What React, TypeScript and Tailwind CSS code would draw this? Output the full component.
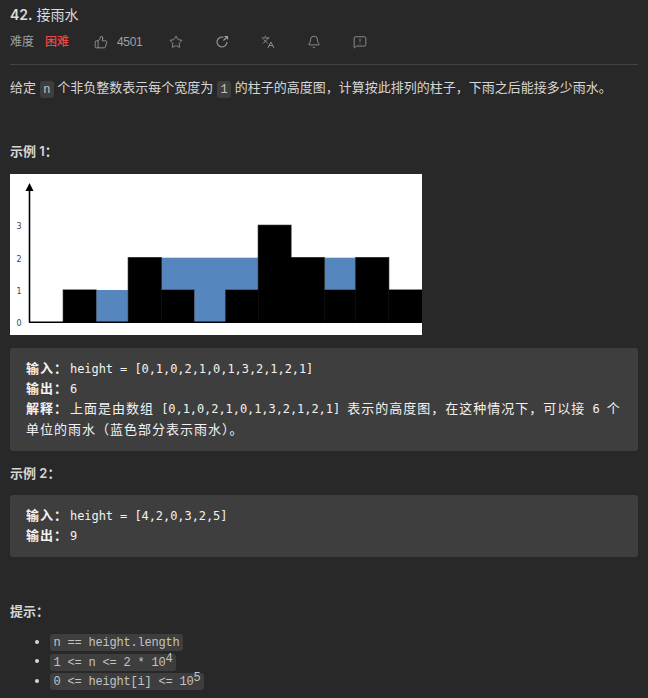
import React from 'react';
import { ThumbsUp, Star, Languages, Bell, MessageSquareWarning } from 'lucide-react';

const SANS = 'font-["Inter","Noto_Sans_CJK_SC",sans-serif]';

const BARS = [
  { x: 53.3, w: 32.7, y: 116 },
  { x: 118.3, w: 33, y: 83.7 },
  { x: 151.3, w: 32.7, y: 116 },
  { x: 215.7, w: 32.6, y: 116 },
  { x: 248.3, w: 32.7, y: 51.3 },
  { x: 281, w: 33.3, y: 83.7 },
  { x: 314.3, w: 31.4, y: 116 },
  { x: 345.7, w: 33, y: 83.7 },
  { x: 378.7, w: 33.3, y: 116 },
];

const RainChart = () => (
  <svg width="412" height="161" viewBox="0 0 412 161" className="block bg-white">
    <rect x="86" y="116" width="32.3" height="32.3" fill="#5586bd" />
    <rect x="151.3" y="83.7" width="97" height="32.3" fill="#5586bd" />
    <rect x="184" y="116" width="31.7" height="32.3" fill="#5586bd" />
    <rect x="314.3" y="83.7" width="31.4" height="32.3" fill="#5586bd" />
    {BARS.map((b, i) => (
      <rect key={i} x={b.x} y={b.y} width={b.w} height={148.3 - b.y} fill="#000" stroke="#444" strokeWidth="1.2" />
    ))}
    {BARS.map((b, i) => (
      <rect key={i} x={b.x} y={b.y} width={b.w} height={148.3 - b.y} fill="#000" />
    ))}
    <line x1="19.5" y1="14" x2="19.5" y2="148.5" stroke="#000" strokeWidth="1.6" />
    <line x1="19" y1="148.3" x2="412" y2="148.3" stroke="#000" strokeWidth="1.6" />
    <path d="M19.5 9 L23.5 17 L15.5 17 Z" fill="#000" />
    {[['3', 55], ['2', 87.5], ['1', 120], ['0', 152]].map(([t, y]) => (
      <text key={t} x="9" y={y} fontSize="8" fill="#444" textAnchor="middle" fontFamily="DejaVu Sans, sans-serif">{t}</text>
    ))}
  </svg>
);

const Code = ({ children }: { children: React.ReactNode }) => (
  <code className='rounded-[3px] bg-[#3e3e3e] px-[3.5px] py-[1.5px] font-["Liberation_Mono",monospace] text-[12px] tracking-[-0.2px] text-[#c4c4c4]'>{children}</code>
);

const Cjk = ({ children }: { children: React.ReactNode }) => (
  <span className='font-["Noto_Sans_CJK_SC",sans-serif] text-[13px] leading-none tracking-[1px]'>{children}</span>
);

const Label = ({ children }: { children: React.ReactNode }) => (
  <span className='mr-[2px] font-["Noto_Sans_CJK_SC",sans-serif] text-[13px] leading-none font-bold tracking-[1px]'>{children}</span>
);

const Pre = ({ children }: { children: React.ReactNode }) => (
  <pre className='rounded-[3px] bg-[#3e3e3e] px-4 py-[10.75px] font-["DejaVu_Sans_Mono",monospace] text-[12px] leading-[20.33px] tracking-[-0.07px] text-[#f2f2f2]'>{children}</pre>
);

export default function App() {
  return (
    <div className={`h-[698px] overflow-hidden bg-[#282828] px-[10px] ${SANS} text-[13px] text-[#d6d6d6]`}>
      <div className="h-[31px] pt-[5px] text-[14px] leading-[20px] text-[#dcdcdc]">
        <span className="font-semibold">42.</span> 接雨水
      </div>

      <div className="flex h-[21px] items-center text-[12px] text-[#a0a0a0]">
        <span className="w-[35px]">难度</span>
        <span className="w-[49px] font-medium text-[#ef4743]">困难</span>
        <ThumbsUp size={14} strokeWidth={1.4} />
        <span className='ml-[9px] w-[52px] font-["Liberation_Sans",sans-serif] text-[12px] tracking-[-0.3px] text-[#a0a0a8]'>4501</span>
        <div className="flex gap-[32px]">
          <Star size={14} strokeWidth={1.4} />
          <svg width="14" height="14" viewBox="0 0 14 14" fill="none" stroke="currentColor" strokeWidth="1.1">
            <path d="M8.5 2.2 A5 5 0 1 0 12 7" />
            <path d="M9.5 1.5 H12.5 V4.5 M12.5 1.5 L8.5 5.5" />
          </svg>
          <Languages size={14} strokeWidth={1.4} />
          <Bell size={14} strokeWidth={1.4} />
          <MessageSquareWarning size={14} strokeWidth={1.4} />
        </div>
      </div>

      <div className="mt-[12px] border-t border-[#434343]" />

      <p className="mt-[12px] leading-[20px]">
        给定 <Code>n</Code> 个非负整数表示每个宽度为 <Code>1</Code> 的柱子的高度图，计算按此排列的柱子，下雨之后能接多少雨水。
      </p>

      <p className="mt-[42px] font-semibold leading-[20px]">示例 1：</p>

      <div className="mt-[13px]">
        <RainChart />
      </div>

      <div className="mt-[13px]">
        <Pre>
          <Label>输入：</Label>height = [0,1,0,2,1,0,1,3,2,1,2,1]{'\n'}
          <Label>输出：</Label>6{'\n'}
          <Label>解释：</Label><Cjk>上面是由数组</Cjk> [0,1,0,2,1,0,1,3,2,1,2,1] <Cjk>表示的高度图，在这种情况下，可以接</Cjk> 6 <Cjk>个</Cjk>{'\n'}
          <Cjk>单位的雨水（蓝色部分表示雨水）。</Cjk>
        </Pre>
      </div>

      <p className="mt-[12px] font-semibold leading-[20px]">示例 2：</p>

      <div className="mt-[12px]">
        <Pre>
          <Label>输入：</Label>height = [4,2,0,3,2,5]{'\n'}
          <Label>输出：</Label>9
        </Pre>
      </div>

      <p className="mt-[44px] font-semibold leading-[20px]">提示：</p>

      <ul className="mt-[11px] list-disc pl-[40px] marker:text-[#d6d6d6]">
        <li className="h-[19.5px] leading-[19.5px]"><Code>n == height.length</Code></li>
        <li className="h-[19.5px] leading-[19.5px]"><Code>1 &lt;= n &lt;= 2 * 10<sup className="top-[-0.3em] text-[12px]">4</sup></Code></li>
        <li className="h-[19.5px] leading-[19.5px]"><Code>0 &lt;= height[i] &lt;= 10<sup className="top-[-0.3em] text-[12px]">5</sup></Code></li>
      </ul>
    </div>
  );
}
